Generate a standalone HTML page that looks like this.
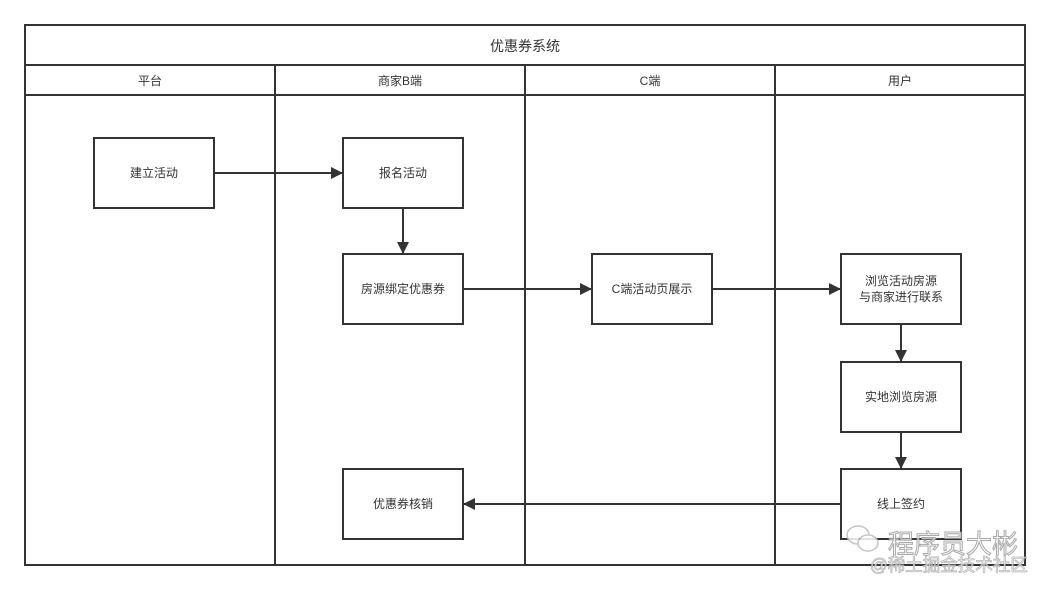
<!DOCTYPE html>
<html><head><meta charset="utf-8"><style>
body{margin:0;background:#fff}
svg text{font-family:"Liberation Sans","Noto Sans CJK SC",sans-serif;fill:#333}
</style></head><body>
<svg width="1050" height="590" viewBox="0 0 1050 590" xmlns="http://www.w3.org/2000/svg">
<defs><marker id="a" markerWidth="12" markerHeight="12" refX="11" refY="6" orient="auto" markerUnits="userSpaceOnUse"><path d="M0,0 L12,6 L0,12 Z" fill="#333"/></marker></defs>
<g stroke="#333" stroke-width="2" fill="none">
<rect x="25" y="25" width="1000" height="540"/>
<line x1="25" y1="65" x2="1025" y2="65"/>
<line x1="25" y1="95" x2="1025" y2="95"/>
<line x1="275" y1="65" x2="275" y2="565"/>
<line x1="525" y1="65" x2="525" y2="565"/>
<line x1="775" y1="65" x2="775" y2="565"/>
<rect x="94" y="138" width="120" height="70"/>
<rect x="343" y="138" width="120" height="70"/>
<rect x="343" y="254" width="120" height="70"/>
<rect x="592" y="254" width="120" height="70"/>
<rect x="841" y="254" width="120" height="70"/>
<rect x="841" y="362" width="120" height="70"/>
<rect x="841" y="469" width="120" height="70"/>
<rect x="343" y="469" width="120" height="70"/>
<line x1="214" y1="173" x2="342" y2="173" marker-end="url(#a)"/>
<line x1="403" y1="208" x2="403" y2="253" marker-end="url(#a)"/>
<line x1="463" y1="289" x2="591" y2="289" marker-end="url(#a)"/>
<line x1="712" y1="289" x2="840" y2="289" marker-end="url(#a)"/>
<line x1="901" y1="324" x2="901" y2="361" marker-end="url(#a)"/>
<line x1="901" y1="432" x2="901" y2="468" marker-end="url(#a)"/>
<line x1="841" y1="504" x2="464" y2="504" marker-end="url(#a)"/>
</g>
<g font-size="12" text-anchor="middle">
<text x="525" y="51" font-size="14">优惠券系统</text>
<text x="150" y="85">平台</text>
<text x="400" y="85">商家B端</text>
<text x="650" y="85">C端</text>
<text x="900" y="85">用户</text>
<text x="154" y="177">建立活动</text>
<text x="403" y="177">报名活动</text>
<text x="403" y="293">房源绑定优惠券</text>
<text x="652" y="293">C端活动页展示</text>
<text x="901" y="285">浏览活动房源</text>
<text x="901" y="301">与商家进行联系</text>
<text x="901" y="401">实地浏览房源</text>
<text x="901" y="508">线上签约</text>
<text x="403" y="508">优惠券核销</text>
</g>
<g opacity="0.85">
<ellipse cx="858" cy="535" rx="11" ry="9" fill="#fff" stroke="#bbb" stroke-width="1.5"/>
<ellipse cx="868" cy="543" rx="10" ry="8" fill="#fff" stroke="#bbb" stroke-width="1.5"/>
<text x="888" y="553" font-size="26" style="fill:#fff;stroke:#999;stroke-width:1">程序员大彬</text>
<text x="870" y="571" font-size="17.5" style="fill:#fff;stroke:#aaa;stroke-width:0.8">@稀土掘金技术社区</text>
</g>
</svg>
</body></html>
